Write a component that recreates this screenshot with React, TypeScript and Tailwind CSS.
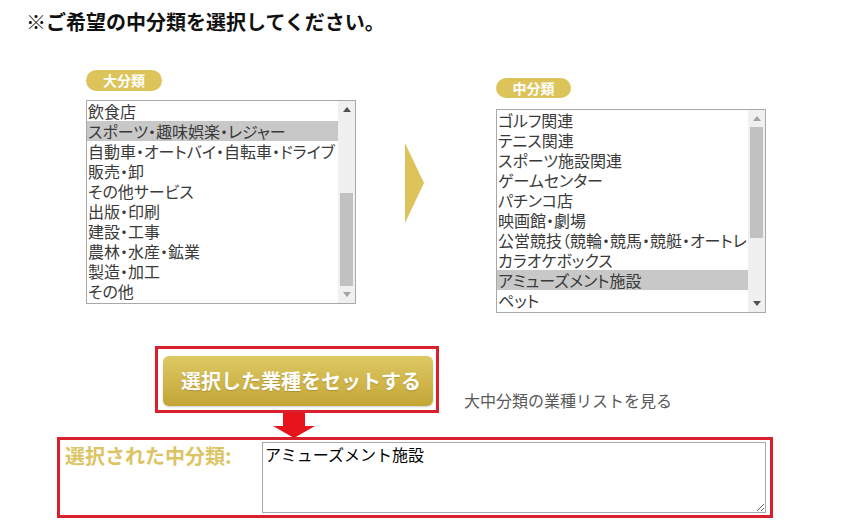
import React from "react";

const JP = "font-['Noto_Sans_CJK_JP','Noto_Sans',sans-serif]";

const bigItems = [
  "飲食店",
  "スポーツ・趣味娯楽・レジャー",
  "自動車・オートバイ・自転車・ドライブ",
  "販売・卸",
  "その他サービス",
  "出版・印刷",
  "建設・工事",
  "農林・水産・鉱業",
  "製造・加工",
  "その他",
];

const midItems = [
  "ゴルフ関連",
  "テニス関連",
  "スポーツ施設関連",
  "ゲームセンター",
  "パチンコ店",
  "映画館・劇場",
  "公営競技（競輪・競馬・競艇・オートレース）",
  "カラオケボックス",
  "アミューズメント施設",
  "ペット",
];

interface ListBoxProps {
  items: string[];
  selected: number;
  thumbClass: string;
  upClass: string;
  downClass: string;
}

function ListBox({ items, selected, thumbClass, upClass, downClass }: ListBoxProps) {
  return (
    <div className="w-[270px] h-[204px] border border-[#a9a9a9] bg-white flex overflow-hidden">
      <div className="flex-1 min-w-0 overflow-hidden">
        {items.map((item, i) => (
          <div
            key={item}
            className={`h-[20px] leading-[20px] text-[16px] text-[#3a3a3a] pl-[1px] whitespace-nowrap overflow-hidden [font-feature-settings:'palt'] ${
              i === selected ? "bg-[#c8c8c8]" : ""
            }`}
          >
            {item}
          </div>
        ))}
      </div>
      <div className="w-[17px] shrink-0 bg-[#f0f0f0] flex flex-col">
        <div className="h-[17px] flex items-center justify-center">
          <svg width="8" height="5" viewBox="0 0 8 5">
            <polygon points="0,5 8,5 4,0" className={upClass} />
          </svg>
        </div>
        <div className={`mx-[2px] bg-[#c1c1c1] ${thumbClass}`} />
        <div className="flex-1" />
        <div className="h-[17px] flex items-center justify-center">
          <svg width="8" height="5" viewBox="0 0 8 5">
            <polygon points="0,0 8,0 4,5" className={downClass} />
          </svg>
        </div>
      </div>
    </div>
  );
}

function Pill({ label, className }: { label: string; className: string }) {
  return (
    <div
      className={`rounded-full bg-[#dcc45a] text-white font-bold text-[14px] flex items-center justify-center ${className}`}
    >
      {label}
    </div>
  );
}

export default function App() {
  return (
    <div className={`w-[850px] h-[527px] bg-white overflow-hidden pt-[8px] ${JP}`}>
      <h1 className="pl-[26px] text-[20px] leading-[28px] font-bold text-[#111]">
        ※ご希望の中分類を選択してください。
      </h1>

      <div className="mt-[34px] pl-[86px] flex items-start">
        <div className="flex flex-col">
          <Pill label="大分類" className="w-[76px] h-[21px]" />
          <div className="mt-[9px]">
            <ListBox
              items={bigItems}
              selected={1}
              thumbClass="mt-[75px] h-[95px]"
              upClass="fill-[#505050]"
              downClass="fill-[#a3a3a3]"
            />
          </div>
        </div>

        <div className="ml-[49px] mt-[73px] w-[19px]">
          <svg width="19" height="80" viewBox="0 0 19 80">
            <polygon points="0,0 19,40 0,80" fill="#dcc45a" />
          </svg>
        </div>

        <div className="ml-[72px] mt-[8px] flex flex-col">
          <Pill label="中分類" className="w-[75px] h-[20px]" />
          <div className="mt-[11px]">
            <ListBox
              items={midItems}
              selected={8}
              thumbClass="h-[111px]"
              upClass="fill-[#a3a3a3]"
              downClass="fill-[#505050]"
            />
          </div>
        </div>
      </div>

      <div className="mt-[33px] pl-[155px] flex items-end">
        <div className="border-[3px] border-[#d9202c] pt-[7px] pb-[4px] pl-[5px] pr-[3px]">
          <button className="w-[270px] h-[50px] rounded-[6px] bg-gradient-to-b from-[#ddc963] to-[#c3a535] text-white font-bold text-[20px] pl-[6px] [text-shadow:0_1px_1px_rgba(120,90,0,0.35)] shadow-[0_1px_2px_rgba(0,0,0,0.2)]">
            選択した業種をセットする
          </button>
        </div>
        <div className="ml-[25px] mb-[1px] text-[16px] leading-[24px] text-[#5a5a5a]">
          大中分類の業種リストを見る
        </div>
      </div>

      <div className="pl-[273px] h-[24px]">
        <svg width="42" height="25" viewBox="0 0 42 25" className="overflow-visible">
          <rect x="10" y="0" width="22" height="13" fill="#e8141c" />
          <polygon points="0,13 42,13 21,25" fill="#e8141c" />
        </svg>
      </div>

      <div className="ml-[57px] w-[716px] h-[81px] border-[3px] border-[#d9202c] flex">
        <div className="w-[202px] pl-[5px] pt-[4px] text-[20px] leading-[24px] font-bold text-[#dcc462]">
          選択された中分類:
        </div>
        <textarea
          readOnly
          defaultValue="アミューズメント施設"
          className={`mt-[2px] w-[504px] h-[71px] border border-[#a9a9a9] pl-[2px] pt-[1px] text-[16px] leading-[20px] text-black outline-none ${JP}`}
        />
      </div>
    </div>
  );
}
